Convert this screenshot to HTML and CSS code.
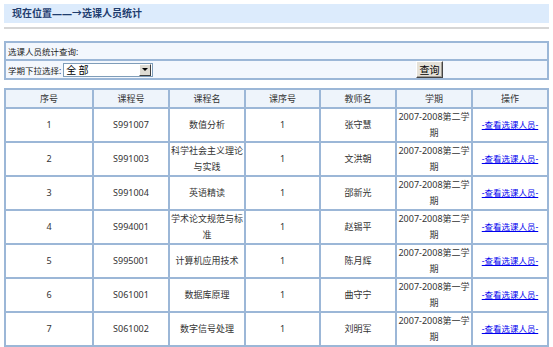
FILE: index.html
```html
<!DOCTYPE html>
<html lang="zh-CN">
<head>
    <meta charset="UTF-8">
    <title>选课人员统计</title>
    <link rel="stylesheet" href="styles.css">
</head>
<body>

    <div class="location-bar">现在位置——→选课人员统计</div>
    <div class="location-rule"></div>

    <!-- 查询条件 -->
    <table class="query-table">
        <tr>
            <td>选课人员统计查询:</td>
        </tr>
        <tr>
            <td>
                <div class="query-row">
                    <div class="query-left">
                        <span>学期下拉选择:</span>
                        <div class="select-box">
                            <select name="term">
                                <option>全 部</option>
                                <option>2007-2008第一学期</option>
                                <option>2007-2008第二学期</option>
                            </select>
                            <span class="select-arrow"></span>
                        </div>
                    </div>
                    <button type="button" class="query-btn">查询</button>
                </div>
            </td>
        </tr>
    </table>

    <!-- 统计结果 -->
    <table class="data-table">
        <thead>
            <tr>
                <th class="col-no">序号</th>
                <th class="col-code">课程号</th>
                <th class="col-name">课程名</th>
                <th class="col-seq">课序号</th>
                <th class="col-teacher">教师名</th>
                <th class="col-term">学期</th>
                <th>操作</th>
            </tr>
        </thead>
        <tbody id="rows"></tbody>
    </table>

    <script>
        const courses = [
            ["1", "S991007", "数值分析", "1", "张守慧", "2007-2008第二学期"],
            ["2", "S991003", "科学社会主义理论与实践", "1", "文洪朝", "2007-2008第二学期"],
            ["3", "S991004", "英语精读", "1", "邵新光", "2007-2008第二学期"],
            ["4", "S994001", "学术论文规范与标准", "1", "赵锡平", "2007-2008第二学期"],
            ["5", "S995001", "计算机应用技术", "1", "陈月辉", "2007-2008第二学期"],
            ["6", "S061001", "数据库原理", "1", "曲守宁", "2007-2008第一学期"],
            ["7", "S061002", "数字信号处理", "1", "刘明军", "2007-2008第一学期"]
        ];

        let rowsHTML = "";
        for (const c of courses) {
            rowsHTML += "<tr>";
            for (const v of c) {
                rowsHTML += `<td>${v}</td>`;
            }
            rowsHTML += `<td><a href="#">-查看选课人员-</a></td></tr>`;
        }
        document.getElementById("rows").innerHTML = rowsHTML;
    </script>

</body>
</html>
```

FILE: styles.css
```css
* {
    box-sizing: border-box;
}

body {
    margin: 4px;
    background: #fff;
    font-family: "Noto Sans", "Noto Sans CJK SC", sans-serif;
    font-size: 9px;
    color: #333;
}

.location-bar {
    height: 19px;
    line-height: 19px;
    padding-left: 8px;
    background: #dcebfc;
    color: #1f3d6e;
    font-size: 10px;
    font-weight: bold;
}

.location-rule {
    height: 2px;
    margin-top: 4px;
    background: #d6d6d6;
}

table {
    width: 100%;
    border-collapse: separate;
    border-spacing: 0;
    border: 1px solid #9cb7d7;
}

td, th {
    border: 1px solid #9cb7d7;
    padding: 0;
}

/* query form */
.query-table {
    margin-top: 12px;
}

.query-table td {
    background: #f3f7fd;
    height: 18px;
    padding-left: 2px;
    color: #222;
    font-size: 8.5px;
}

.query-row {
    display: flex;
    align-items: center;
}

.query-left {
    display: flex;
    align-items: center;
    width: 408px;
}

.select-box {
    display: flex;
    width: 90px;
    height: 14px;
    border: 1px solid #7f9db9;
    background: #fff;
    margin-left: 2px;
}

.select-box select {
    appearance: none;
    -webkit-appearance: none;
    flex: 1;
    min-width: 0;
    border: none;
    outline: none;
    background: transparent;
    font-family: "Noto Sans CJK SC", sans-serif;
    font-size: 10px;
    line-height: 12px;
    padding: 0 0 0 2px;
    color: #000;
}

.select-arrow {
    width: 12px;
    margin: 0 1px 0 0;
    background: #dedbd3;
    border: 1px solid;
    border-color: #fff #404040 #404040 #fff;
    display: flex;
    align-items: center;
    justify-content: center;
}

.select-arrow::after {
    content: "";
    border-left: 3px solid transparent;
    border-right: 3px solid transparent;
    border-top: 3px solid #000;
}

.query-btn {
    width: 27px;
    height: 17px;
    padding: 0;
    font-family: "Noto Sans CJK SC", sans-serif;
    font-size: 10px;
    color: #000;
    background: #e5e1d8;
    border: 1px solid;
    border-color: #fff #444 #444 #fff;
    box-shadow: inset -1px -1px 0 #a09c94;
    cursor: pointer;
}

/* result table */
.data-table {
    margin-top: 8px;
    table-layout: fixed;
}

.data-table th {
    background: #eef4fb;
    font-weight: normal;
    height: 19px;
    color: #333;
}

.data-table td {
    height: 34px;
    line-height: 16px;
    text-align: center;
    background: #fff;
    padding: 0 1px;
}

.col-no { width: 88px; }
.col-code { width: 76px; }
.col-name { width: 76px; }
.col-seq { width: 75px; }
.col-teacher { width: 76px; }
.col-term { width: 76px; }

.data-table a {
    color: #0000ee;
    font-size: 8.5px;
    text-decoration: underline;
}
```
